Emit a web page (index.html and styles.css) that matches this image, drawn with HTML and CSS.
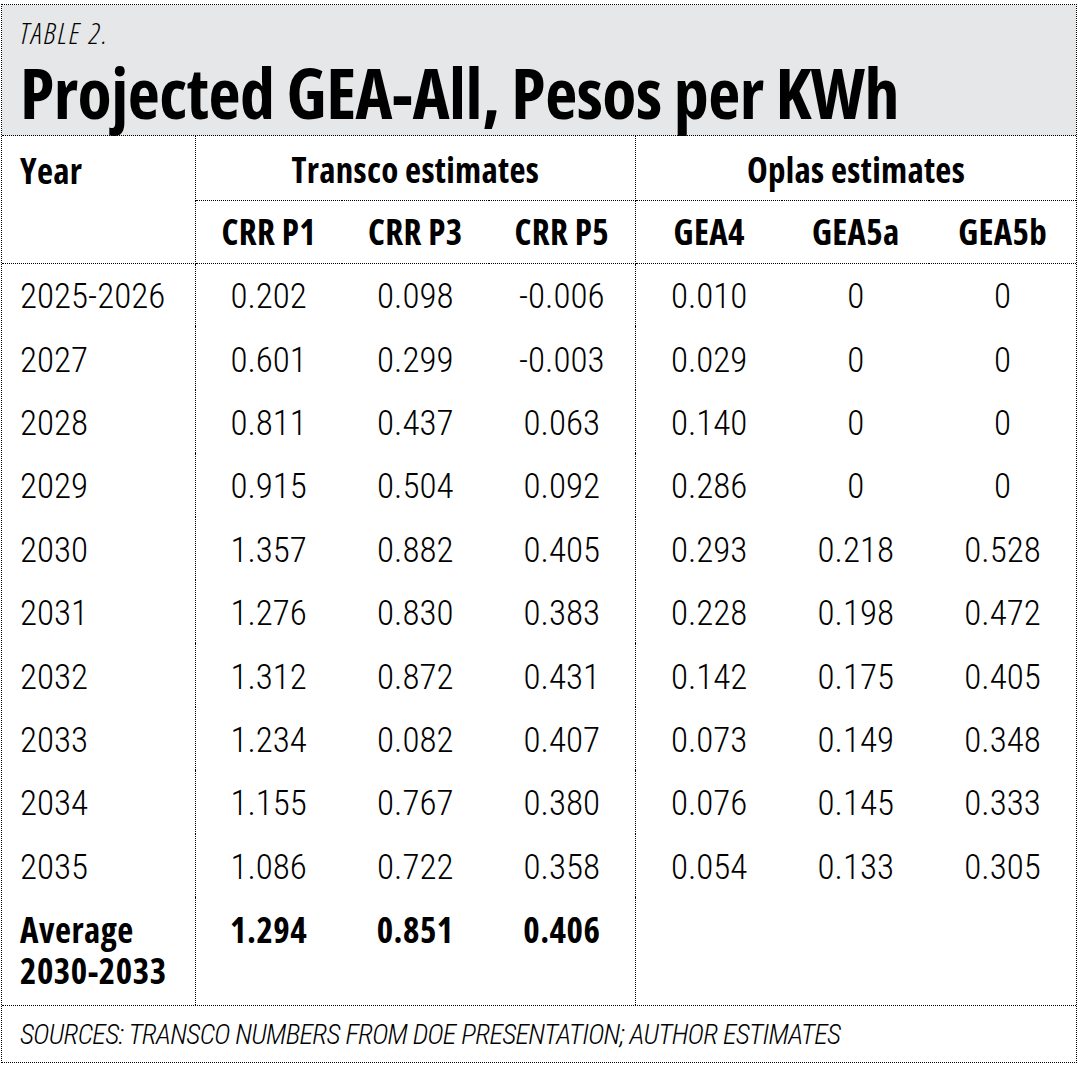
FILE: index.html
```html
<!DOCTYPE html>
<html lang="en">
<head>
<meta charset="utf-8">
<title>Table 2. Projected GEA-All, Pesos per KWh</title>
<link rel="stylesheet" href="styles.css">
</head>
<body>
<div class="card">
  <header class="head">
    <div class="kicker">TABLE 2.</div>
    <h1 class="title">Projected GEA-All, Pesos per KWh</h1>
  </header>
  <table class="grid">
    <colgroup>
      <col class="col-year">
      <col class="col-num"><col class="col-num"><col class="col-num">
      <col class="col-num"><col class="col-num"><col class="col-num">
    </colgroup>
    <thead>
      <tr class="row-group">
        <th class="year-head sep" rowspan="2">Year</th>
        <th class="group sep" colspan="3">Transco estimates</th>
        <th class="group" colspan="3">Oplas estimates</th>
      </tr>
      <tr class="row-sub">
        <th>CRR P1</th><th>CRR P3</th><th class="sep">CRR P5</th>
        <th>GEA4</th><th>GEA5a</th><th>GEA5b</th>
      </tr>
    </thead>
    <tbody class="body">
      <tr><th class="sep">2025-2026</th><td>0.202</td><td>0.098</td><td class="sep">-0.006</td><td>0.010</td><td>0</td><td>0</td></tr>
      <tr><th class="sep">2027</th><td>0.601</td><td>0.299</td><td class="sep">-0.003</td><td>0.029</td><td>0</td><td>0</td></tr>
      <tr><th class="sep">2028</th><td>0.811</td><td>0.437</td><td class="sep">0.063</td><td>0.140</td><td>0</td><td>0</td></tr>
      <tr><th class="sep">2029</th><td>0.915</td><td>0.504</td><td class="sep">0.092</td><td>0.286</td><td>0</td><td>0</td></tr>
      <tr><th class="sep">2030</th><td>1.357</td><td>0.882</td><td class="sep">0.405</td><td>0.293</td><td>0.218</td><td>0.528</td></tr>
      <tr><th class="sep">2031</th><td>1.276</td><td>0.830</td><td class="sep">0.383</td><td>0.228</td><td>0.198</td><td>0.472</td></tr>
      <tr><th class="sep">2032</th><td>1.312</td><td>0.872</td><td class="sep">0.431</td><td>0.142</td><td>0.175</td><td>0.405</td></tr>
      <tr><th class="sep">2033</th><td>1.234</td><td>0.082</td><td class="sep">0.407</td><td>0.073</td><td>0.149</td><td>0.348</td></tr>
      <tr><th class="sep">2034</th><td>1.155</td><td>0.767</td><td class="sep">0.380</td><td>0.076</td><td>0.145</td><td>0.333</td></tr>
      <tr><th class="sep">2035</th><td>1.086</td><td>0.722</td><td class="sep">0.358</td><td>0.054</td><td>0.133</td><td>0.305</td></tr>
    </tbody>
    <tbody class="avg">
      <tr><th class="sep">Average<br>2030-2033</th><td>1.294</td><td>0.851</td><td class="sep">0.406</td><td></td><td></td><td></td></tr>
    </tbody>
  </table>
  <footer class="source">SOURCES: TRANSCO NUMBERS FROM DOE PRESENTATION; AUTHOR ESTIMATES</footer>
</div>
</body>
</html>
```
FILE: styles.css
```css
html, body {
  margin: 0;
  padding: 0;
  background: #fff;
}

body {
  font-family: "Open Sans", "Roboto", sans-serif;
  color: #000;
}

.card {
  box-sizing: border-box;
  width: 1076px;
  height: 1059px;
  margin: 4px 0 0 1px;
  border: 1px dotted #000;
  display: flex;
  flex-direction: column;
}

.head {
  background: #e6e7e8;
  height: 131px;
  padding: 13px 0 0 18px;
  box-sizing: border-box;
  border-bottom: 1px dotted #000;
  flex: none;
}

.kicker {
  font-size: 30px;
  font-weight: 300;
  font-style: italic;
  font-stretch: 75%;
  letter-spacing: 2px;
  line-height: 30px;
}

.title {
  margin: 8px 0 0;
  font-size: 70px;
  font-weight: 700;
  font-stretch: 75%;
  line-height: 72px;
  letter-spacing: -0.5px;
}

.grid {
  width: 100%;
  table-layout: fixed;
  border-collapse: collapse;
  flex: none;
}

.col-year { width: 193px; }

.grid th,
.grid td {
  padding: 0;
  text-align: center;
  vertical-align: middle;
}

.grid .sep {
  border-right: 1px dotted #000;
}

.row-group { height: 64px; }
.row-sub { height: 63px; }

.row-group th,
.row-sub th {
  font-size: 35px;
  font-weight: 700;
  font-stretch: 75%;
  letter-spacing: 0.3px;
}

.row-group .group {
  padding-top: 3px;
  border-bottom: 1px dotted #000;
}

.row-sub th {
  border-bottom: 1px dotted #000;
}

.grid .year-head {
  text-align: left;
  vertical-align: top;
  padding: 11px 0 0 18px;
  border-bottom: 1px dotted #000;
}

.body tr { height: 63.4px; }

.grid .body th,
.grid .body td {
  font-family: "Roboto", "Open Sans", sans-serif;
  font-size: 35px;
  font-weight: 300;
  font-stretch: 75%;
  padding-top: 4px;
}

.grid .body th {
  text-align: left;
  padding-left: 18px;
}

.avg tr { height: 108px; }

.avg th,
.avg td {
  font-size: 35px;
  font-weight: 700;
  font-stretch: 75%;
  letter-spacing: 0.5px;
  line-height: 41px;
}

.grid .avg th,
.grid .avg td {
  vertical-align: top;
  padding-top: 12px;
}

.grid .avg th {
  text-align: left;
  padding-left: 18px;
}

.source {
  border-top: 1px dotted #000;
  flex: 1;
  padding: 12px 0 0 18px;
  font-family: "Roboto", "Open Sans", sans-serif;
  font-size: 28px;
  font-weight: 300;
  font-style: italic;
  font-stretch: 75%;
  letter-spacing: -0.7px;
}
```
